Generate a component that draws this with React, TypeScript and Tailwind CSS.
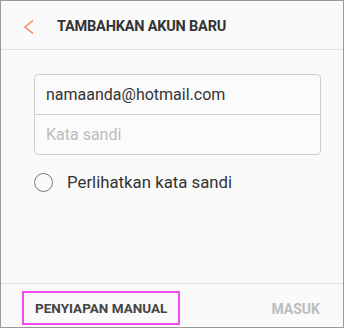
const App = () => {
  return (
    <div className="w-[345px] h-[329px] bg-white">
      <div
        className="w-[344px] h-[328px] border border-[#9a9a9a] bg-[#fafafa] flex flex-col text-[#333]"
        style={{ fontFamily: 'Roboto, "Liberation Sans", Arial, sans-serif' }}
      >
        {/* Header */}
        <div className="h-[49px] pt-[4px] flex items-center border-b border-[#e4e4e4] shrink-0">
          <svg width="12" height="16" viewBox="0 0 12 16" className="ml-[22px]">
            <path d="M10 1.5 L2 8 L10 14.5" fill="none" stroke="#f5895a" strokeWidth="1.6" />
          </svg>
          <h1 className="ml-[22px] text-[14.5px] font-bold tracking-[-0.2px] text-[#333]">TAMBAHKAN AKUN BARU</h1>
        </div>

        {/* Form */}
        <div className="flex-1 px-[33px] pt-[24px]">
          <div className="w-[287px] border border-[#cfcfcf] rounded-[4px] bg-[#fbfbfb]">
            <div className="h-[40px] flex items-center px-[11px] border-b border-[#cfcfcf] text-[16px] text-[#333]">
              namaanda@hotmail.com
            </div>
            <div className="h-[39px] flex items-center px-[11px] text-[16px] text-[#bdbdbd]">
              Kata sandi
            </div>
          </div>

          <div className="flex items-center mt-[15px]">
            <span className="w-[19px] h-[19px] rounded-full border-[1.5px] border-[#777] shrink-0" />
            <span className="ml-[14px] text-[16.8px] text-[#333]">Perlihatkan kata sandi</span>
          </div>
        </div>

        {/* Footer */}
        <div className="h-[44px] border-t border-[#e0e0e0] flex items-start justify-between shrink-0">
          <div className="ml-[21px] mt-[7px] w-[158px] h-[34px] border-2 border-[#f24cf0] flex items-center pl-[11px]">
            <span className="text-[13.5px] font-bold text-[#444]">PENYIAPAN MANUAL</span>
          </div>
          <span className="mr-[23px] mt-[15px] text-[14px] font-bold text-[#bdbdbd]">MASUK</span>
        </div>
      </div>
    </div>
  )
}

export default App
